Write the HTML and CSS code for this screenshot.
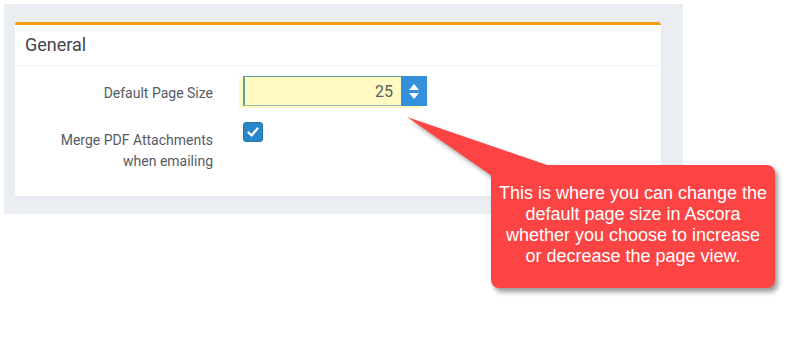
FILE: index.html
```html
<!DOCTYPE html>
<html>
<head>
<meta charset="utf-8">
<link rel="stylesheet" href="styles.css">
</head>
<body>
<div class="page">
  <div class="card">
    <div class="card-head">General</div>
    <div class="card-body">
      <div class="row row-input">
        <div class="label">Default Page Size</div>
        <div class="spin">
          <div class="spin-input">25</div>
          <div class="spin-btn">
            <svg width="12" height="20" viewBox="0 0 12 20"><polygon points="6,3 11,9 1,9" fill="#fff"/><polygon points="1,12 11,12 6,18" fill="#fff"/></svg>
          </div>
        </div>
      </div>
      <div class="row row-check">
        <div class="label label-multi">Merge PDF Attachments<br>when emailing</div>
        <div class="check">
          <svg width="18" height="18" viewBox="0 0 18 18"><polyline points="4.5,9.5 7.5,12.5 13.5,5.5" fill="none" stroke="#fff" stroke-width="2.2" stroke-linecap="round" stroke-linejoin="round"/></svg>
        </div>
      </div>
    </div>
  </div>
</div>
<div class="callout">
  <svg class="callout-tail" width="803" height="348" viewBox="0 0 803 348"><polygon points="407,117 550,166 492,176" fill="#fc4444"/></svg>
  <div class="callout-box">This is where you can change the<br>default page size in Ascora<br>whether you choose to increase<br>or decrease the page view.</div>
</div>
</body>
</html>
```
FILE: styles.css
```css
html, body {
  margin: 0;
  padding: 0;
  background: #fff;
}
body {
  width: 803px;
  height: 348px;
  position: relative;
  overflow: hidden;
  font-family: Roboto, "Liberation Sans", sans-serif;
}
.page {
  margin: 4px 0 0 4px;
  width: 679px;
  height: 210px;
  box-sizing: border-box;
  padding: 18px 22px 18px 11px;
  background: #eaedf2;
}
.card {
  height: 174px;
  box-sizing: border-box;
  background: #fff;
  border-top: 3px solid #f39c12;
  border-radius: 3px 3px 2px 2px;
  box-shadow: 0 0 0 1px #e8ebef;
}
.card-head {
  height: 41px;
  box-sizing: border-box;
  padding: 9px 10px 0;
  font-size: 18px;
  color: #3f4650;
  border-bottom: 1px solid #eef0f2;
}
.card-body {
  padding-top: 10px;
}
.row {
  display: flex;
  gap: 30px;
}
.row-input {
  align-items: center;
  height: 30px;
}
.row-check {
  margin-top: 16px;
}
.label {
  width: 198px;
  text-align: right;
  font-size: 14px;
  color: #555b63;
}
.row-input .label {
  padding-top: 3px;
}
.label-multi {
  line-height: 21px;
  padding-top: 8px;
}
.spin {
  display: flex;
  height: 30px;
  box-shadow: -4px 2px 0 #fffac4;
}
.spin-input {
  width: 158px;
  box-sizing: border-box;
  background: #fff9c2;
  border-top: 1px solid #5e9e98;
  border-left: 2px solid #5e9e98;
  border-bottom: 1px solid #8fbfb0;
  text-align: right;
  padding: 5px 8px 0 0;
  font-size: 16px;
  color: #5a5d60;
}
.spin-btn {
  width: 26px;
  background: #3590dc;
  display: flex;
  align-items: center;
  justify-content: center;
}
.check {
  width: 18px;
  height: 18px;
  background: #2a86c8;
  border-radius: 3px;
  border: 1px solid #2475b0;
}
.check svg {
  display: block;
}
.callout {
  position: absolute;
  left: 0;
  top: 0;
  width: 803px;
  height: 348px;
  pointer-events: none;
}
.callout-tail {
  position: absolute;
  left: 0;
  top: 0;
  filter: drop-shadow(2px 3px 2px rgba(0,0,0,0.35));
}
.callout-box {
  position: absolute;
  left: 491px;
  top: 165px;
  width: 284px;
  height: 123px;
  box-sizing: border-box;
  padding: 18px 2px 0;
  background: #fc4444;
  border-radius: 8px;
  box-shadow: 3px 4px 5px rgba(0,0,0,0.4);
  color: #fff;
  text-align: center;
  font-family: "Liberation Sans", Arial, sans-serif;
  font-size: 18px;
  line-height: 21px;
  white-space: nowrap;
}
```
